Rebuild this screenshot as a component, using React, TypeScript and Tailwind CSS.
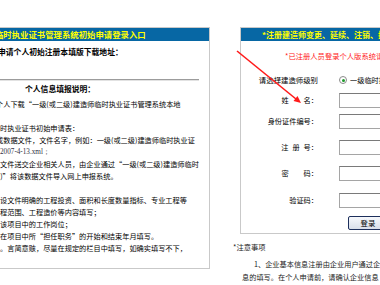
const cjk = "font-['Noto_Sans_CJK_SC','Noto_Sans',sans-serif]";

function BodyLine({ text, indent = "", className = "" }: { text: string; indent?: string; className?: string }) {
  return (
    <div className={`h-[12px] whitespace-nowrap text-[7.2px] leading-[12px] text-[#000] ${indent} ${className}`}>
      {text}
    </div>
  );
}

function FormRow({ label, className = "" }: { label: React.ReactNode; className?: string }) {
  return (
    <div className={`flex h-[15px] items-center ${className}`}>
      <div className="flex w-[77px] justify-end whitespace-nowrap text-[7.2px] text-[#000]">{label}</div>
      <div className="ml-[21px] h-[15px] w-[80px] border border-[#a5a5a5] border-t-[#7a7a7a] bg-white" />
    </div>
  );
}

export default function App() {
  return (
    <div className={`relative h-[285px] w-[380px] overflow-hidden bg-white ${cjk}`}>
      <div className="flex pt-[27px]">
        {/* left panel, page scrolled so its left side is cut */}
        <div className="h-[242px] w-[210px] shrink-0 overflow-hidden border-y border-r border-[#c9c9c9]">
          <div className="h-[13px] whitespace-nowrap bg-[#0767a4] indent-[-5px] text-[8.4px] font-bold leading-[13px] text-[#ffff00]">
            临时执业证书管理系统初始申请登录入口
          </div>
          <div className="mt-[5px] h-[12px] whitespace-nowrap indent-[-2px] text-[7.8px] font-bold leading-[12px] text-[#000]">
            申请个人初始注册本填版下载地址：
          </div>
          <div className="mt-[21px] mr-[10px] h-[2px] border-t border-b border-t-[#9c9c9c] border-b-[#e2e2e2]" />
          <div className="mt-[2px] h-[12px] pl-[25px] text-[7.8px] font-bold leading-[12px] text-[#000]">
            个人信息填报说明：
          </div>
          <div className="mt-[3px]">
            <BodyLine indent="indent-[-4px]" text="个人下载“一级(或二级)建造师临时执业证书管理系统本地" />
            <BodyLine text="" />
            <BodyLine text="时执业证书初始申请表：" />
            <BodyLine indent="indent-[-4px]" text="成数据文件，文件名字，例如：一级(或二级)建造师临时执业证" />
            <BodyLine className="font-['Liberation_Serif',serif] text-[#334]" text="2007-4-13.xml；" />
            <BodyLine text="文件送交企业相关人员，由企业通过“一级(或二级)建造师临时" />
            <BodyLine indent="indent-[-7px]" text="级)”将该数据文件导入网上申报系统。" />
            <BodyLine text="" />
            <BodyLine text="设文件明确的工程投资、面积和长度数量指标、专业工程等" />
            <BodyLine text="程范围、工程造价等内容填写；" />
            <BodyLine text="该项目中的工作岗位；" />
            <BodyLine text="在项目中所“担任职务”的开始和结束年月填写。" />
            <BodyLine text="。言简意赅，尽量在规定的栏目中填写，如确实填写不下，" />
          </div>
        </div>

        {/* right column */}
        <div className="ml-[30px] w-[200px] shrink-0">
          <div className="h-[207px] border border-[#c9c9c9]">
            <div className="h-[13px] whitespace-nowrap bg-[#0767a4] pl-[21px] text-[8px] font-bold leading-[13px] text-[#ffff00]">
              *注册建造师变更、延续、注销、执业印章申请入口
            </div>
            <div className="mt-[9px] h-[12px] whitespace-nowrap pl-[44px] text-[7.3px] leading-[12px] text-[#ff2020]">
              *已注册人员登录个人版系统请选择级别
            </div>
            <div className="mt-[11px] flex h-[14px] items-center">
              <div className="w-[77px] whitespace-nowrap text-right text-[7.4px] text-[#000]">请选择建造师级别</div>
              <div className="ml-[21px] flex h-[8px] w-[8px] items-center justify-center rounded-full border border-[#8a8a8a] bg-white">
                <div className="h-[3px] w-[3px] rounded-full bg-[#1c9a2a]" />
              </div>
              <span className="ml-[3px] whitespace-nowrap text-[7.2px] text-[#000]">一级临时执业</span>
            </div>
            <FormRow
              className="mt-[6px]"
              label={
                <>
                  <span>姓</span>
                  <span className="inline-block w-[15px]" />
                  <span>名：</span>
                </>
              }
            />
            <FormRow className="mt-[6px]" label="身份证件编号：" />
            <FormRow
              className="mt-[11px]"
              label={
                <>
                  <span>注</span>
                  <span className="inline-block w-[4px]" />
                  <span>册</span>
                  <span className="inline-block w-[4px]" />
                  <span>号：</span>
                </>
              }
            />
            <FormRow
              className="mt-[11px]"
              label={
                <>
                  <span>密</span>
                  <span className="inline-block w-[15px]" />
                  <span>码：</span>
                </>
              }
            />
            <FormRow className="mt-[12px]" label="验证码：" />
            <div className="mt-[8px] ml-[107px] flex h-[14px] w-[40px] items-center justify-center rounded-[2px] border border-[#1d2f5c] bg-gradient-to-b from-[#f6f8fc] to-[#d9dfea] text-[7.4px] text-[#000]">
              登录
            </div>
          </div>
          <div className="mt-[7px] -ml-[7px] h-[12px] whitespace-nowrap text-[7.3px] leading-[12px] text-[#222]">*注意事项</div>
          <div className="mt-[5px] whitespace-nowrap text-[7.2px] leading-[13px] text-[#222]">
            <div className="pl-[14px]">1、企业基本信息注册由企业用户通过企业版系统</div>
            <div className="pl-[2px]">息的填写。在个人申请前，请确认企业信息</div>
          </div>
        </div>
      </div>

      {/* red arrow pointing at the name field */}
      <svg className="pointer-events-none absolute left-0 top-0" width="380" height="285">
        <line x1="237" y1="51" x2="296" y2="99" stroke="#ff1a1a" strokeWidth="1.6" />
        <polygon points="301,103 293.5,101 297.5,96" fill="#ff1a1a" />
      </svg>
    </div>
  );
}
